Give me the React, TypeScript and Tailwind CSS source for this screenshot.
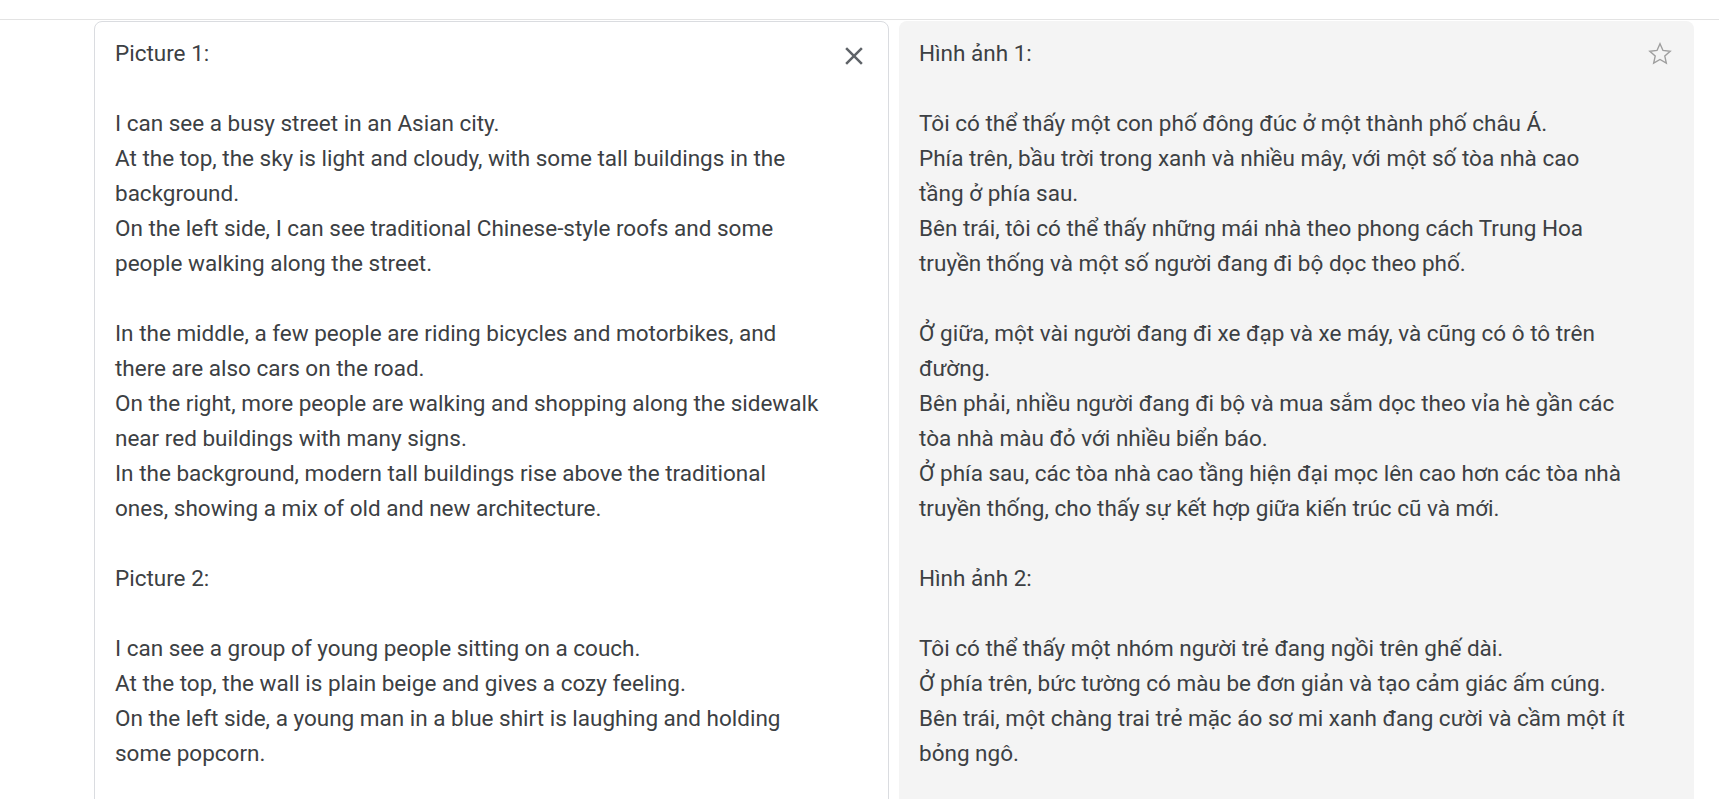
import React from "react";

const leftText = `Picture 1:

I can see a busy street in an Asian city.
At the top, the sky is light and cloudy, with some tall buildings in the background.
On the left side, I can see traditional Chinese-style roofs and some people walking along the street.

In the middle, a few people are riding bicycles and motorbikes, and there are also cars on the road.
On the right, more people are walking and shopping along the sidewalk near red buildings with many signs.
In the background, modern tall buildings rise above the traditional ones, showing a mix of old and new architecture.

Picture 2:

I can see a group of young people sitting on a couch.
At the top, the wall is plain beige and gives a cozy feeling.
On the left side, a young man in a blue shirt is laughing and holding some popcorn.

In the middle, two girls are smiling and looking at the screen.
On the right, another friend is holding a drink and relaxing.`;

const rightText = `Hình ảnh 1:

Tôi có thể thấy một con phố đông đúc ở một thành phố châu Á.
Phía trên, bầu trời trong xanh và nhiều mây, với một số tòa nhà cao tầng ở phía sau.
Bên trái, tôi có thể thấy những mái nhà theo phong cách Trung Hoa truyền thống và một số người đang đi bộ dọc theo phố.

Ở giữa, một vài người đang đi xe đạp và xe máy, và cũng có ô tô trên đường.
Bên phải, nhiều người đang đi bộ và mua sắm dọc theo vỉa hè gần các tòa nhà màu đỏ với nhiều biển báo.
Ở phía sau, các tòa nhà cao tầng hiện đại mọc lên cao hơn các tòa nhà truyền thống, cho thấy sự kết hợp giữa kiến trúc cũ và mới.

Hình ảnh 2:

Tôi có thể thấy một nhóm người trẻ đang ngồi trên ghế dài.
Ở phía trên, bức tường có màu be đơn giản và tạo cảm giác ấm cúng.
Bên trái, một chàng trai trẻ mặc áo sơ mi xanh đang cười và cầm một ít bỏng ngô.

Ở giữa, hai cô gái đang mỉm cười và nhìn vào màn hình.
Bên phải, một người bạn khác đang cầm đồ uống và thư giãn.`;

export default function App() {
  return (
    <div className="bg-white min-h-screen font-['Roboto','Noto_Sans',sans-serif]">
      <div className="h-[20px] border-b border-[#e3e3e3]" />
      <div className="flex gap-[10px] pl-[94px] pt-px">
        <div className="relative w-[795px] shrink-0 rounded-t-[8px] border border-[#dadce0] pl-[20px] pr-[67px] pt-[13.5px] pb-[40px]">
          <div className="whitespace-pre-wrap text-[22.5px] leading-[35px] text-[#3c4043]">
            {leftText}
          </div>
          <button className="absolute right-[19px] top-[19px] flex h-[30px] w-[30px] items-center justify-center">
            <svg width="30" height="30" viewBox="0 0 24 24" fill="#5f6368">
              <path d="M19 6.41 17.59 5 12 10.59 6.41 5 5 6.41 10.59 12 5 17.59 6.41 19 12 13.41 17.59 19 19 17.59 13.41 12z" />
            </svg>
          </button>
        </div>
        <div className="relative w-[795px] shrink-0 rounded-t-[8px] bg-[#f4f4f4] pl-[20px] pr-[69px] pt-[14.5px] pb-[41px]">
          <div className="whitespace-pre-wrap text-[22.5px] leading-[35px] text-[#3c4043]">
            {rightText}
          </div>
          <button className="absolute right-[21px] top-[20px] flex h-[26px] w-[26px] items-center justify-center">
            <svg width="26" height="26" viewBox="0 0 24 24" fill="none" stroke="#9e9e9e" strokeWidth="1.3" strokeLinejoin="miter">
              <path d="M12 2.6l2.75 6.1 6.65.7-4.97 4.47 1.4 6.53L12 17.06 6.17 20.4l1.4-6.53L2.6 9.4l6.65-.7z" />
            </svg>
          </button>
        </div>
      </div>
    </div>
  );
}
